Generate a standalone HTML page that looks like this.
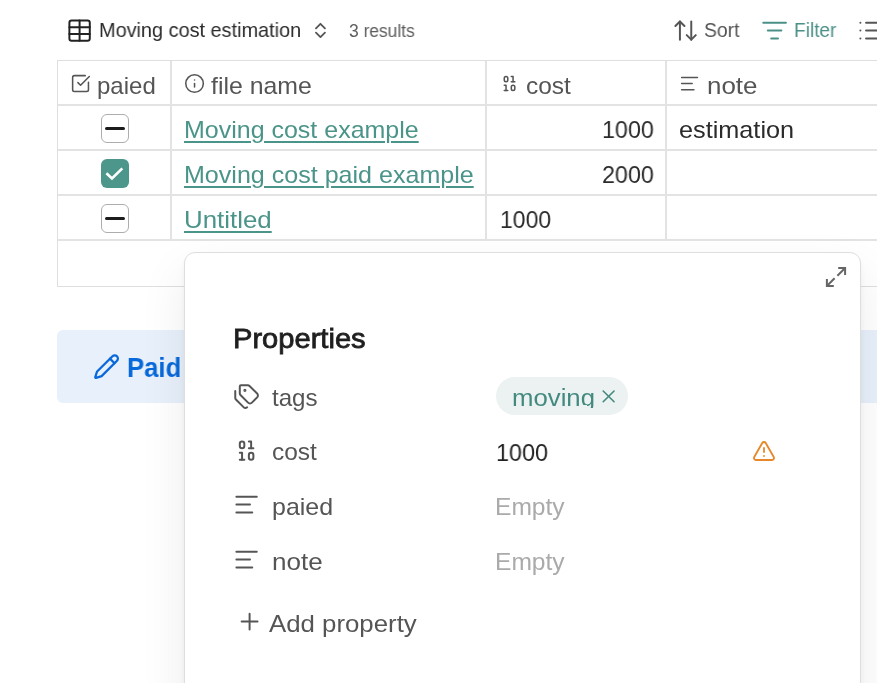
<!DOCTYPE html>
<html>
<head>
<meta charset="utf-8">
<title>Moving cost estimation</title>
<style>
html,body{margin:0;padding:0;}
body{width:877px;height:683px;overflow:hidden;background:#fff;position:relative;font-family:"Liberation Sans",sans-serif;color:#333;}
.t{position:absolute;white-space:nowrap;line-height:1;transform-origin:0 0;will-change:transform;}
.a{position:absolute;}
svg{position:absolute;overflow:visible;fill:none;stroke-linecap:round;stroke-linejoin:round;}
.i27{width:27.2px;height:27.2px;stroke-width:1.75;}
.i21{width:21.1px;height:21.1px;stroke-width:1.75;stroke:#555;}
.i24{width:24.75px;height:24.75px;stroke-width:1.75;}
.hl{position:absolute;height:1px;background:#dfdfdf;}
.h2{height:2px;background:#e3e3e3;}
.vl{position:absolute;width:1px;background:#dfdfdf;}
.v2{width:2px;background:#e3e3e3;}
.cb{position:absolute;width:25.6px;height:27px;border:1.1px solid #adadad;border-radius:6px;background:#fff;}
.cb i{position:absolute;left:2.9px;top:12.05px;width:19.9px;height:3px;border-radius:1.5px;background:#1c1c1c;}
.cbc{position:absolute;width:27.9px;height:29.2px;border-radius:6px;background:#4d968c;}
.lnk{color:#4b9489;text-decoration:underline;text-decoration-thickness:1.7px;text-underline-offset:3px;}
.hd{color:#555;}
.lab{color:#555;}
.emp{color:#aaa;}
</style>
</head>
<body>

<!-- toolbar -->
<svg class="i27" style="left:65.95px;top:17.1px;stroke:#222" viewBox="0 0 24 24"><path d="M12 3v18"/><rect width="18" height="18" x="3" y="3" rx="2"/><path d="M3 9h18"/><path d="M3 15h18"/></svg>
<span class="t" style="left:99.1px;top:20.3px;font-size:20.3px;color:#2b2b2b;transform:scaleX(.98)">Moving cost estimation</span>
<svg style="left:0;top:0;stroke:#555;stroke-width:1.8" width="400" height="60"><path d="M315.95 28.3L320.45 23.8L324.95 28.3M315.95 32.65L320.45 37.15L324.95 32.65"/></svg>
<span class="t" style="left:348.6px;top:22.9px;font-size:17.6px;color:#5c5c5c;transform:scaleX(.9885)">3 results</span>

<svg class="i27" style="left:671.9px;top:16.7px;stroke:#555" viewBox="0 0 24 24"><path d="m21 16-4 4-4-4"/><path d="M17 20V4"/><path d="m3 8 4-4 4 4"/><path d="M7 4v16"/></svg>
<span class="t" style="left:704.3px;top:20.3px;font-size:20.3px;color:#555;transform:scaleX(.955)">Sort</span>
<svg class="i27" style="left:760.85px;top:17px;stroke:#4b9088" viewBox="0 0 24 24"><path d="M2 5h20"/><path d="M6 12h12"/><path d="M9 19h6"/></svg>
<span class="t" style="left:794.3px;top:20.3px;font-size:20.3px;color:#4b9088;transform:scaleX(.94)">Filter</span>
<svg class="i27" style="left:856.9px;top:17px;stroke:#555" viewBox="0 0 24 24"><path d="M3 5h.01"/><path d="M3 12h.01"/><path d="M3 19h.01"/><path d="M8 5h13"/><path d="M8 12h13"/><path d="M8 19h13"/></svg>

<!-- table grid -->
<div class="hl" style="left:57px;top:60px;width:820px"></div>
<div class="hl h2" style="left:58px;top:104px;width:820px"></div>
<div class="hl h2" style="left:58px;top:149px;width:820px"></div>
<div class="hl h2" style="left:58px;top:194px;width:820px"></div>
<div class="hl h2" style="left:58px;top:239px;width:820px"></div>
<div class="hl" style="left:57px;top:286px;width:820px"></div>
<div class="vl" style="left:57px;top:60px;height:227px"></div>
<div class="vl v2" style="left:170px;top:61px;height:180px"></div>
<div class="vl v2" style="left:485px;top:61px;height:180px"></div>
<div class="vl v2" style="left:665px;top:61px;height:180px"></div>

<!-- header row -->
<svg class="i21" style="left:69.9px;top:73px" viewBox="0 0 24 24"><path d="M21 10.656V19a2 2 0 0 1-2 2H5a2 2 0 0 1-2-2V5a2 2 0 0 1 2-2h12.344"/><path d="m9 11 3 3L22 4"/></svg>
<span class="t hd" style="left:97.3px;top:74.1px;font-size:24px;transform:scaleX(.995)">paied</span>
<svg class="i21" style="left:183.55px;top:73px" viewBox="0 0 24 24"><circle cx="12" cy="12" r="10"/><path d="M12 16v-4"/><path d="M12 8h.01"/></svg>
<span class="t hd" style="left:210.8px;top:74.1px;font-size:24px;transform:scaleX(1.035)">file name</span>
<svg class="i21" style="left:498.85px;top:73px" viewBox="0 0 24 24"><rect x="14" y="14" width="4" height="6" rx="2"/><rect x="6" y="4" width="4" height="6" rx="2"/><path d="M6 20h4"/><path d="M14 10h4"/><path d="M6 14h2v6"/><path d="M14 4h2v6"/></svg>
<span class="t hd" style="left:526px;top:74.1px;font-size:24px;transform:scaleX(1.02)">cost</span>
<svg class="i21" style="left:678.5px;top:73px" viewBox="0 0 24 24"><path d="M21 5H3"/><path d="M15 12H3"/><path d="M17 19H3"/></svg>
<span class="t hd" style="left:706.5px;top:74.1px;font-size:24px;transform:scaleX(1.08)">note</span>

<!-- rows -->
<div class="cb" style="left:101.05px;top:113.9px"><i></i></div>
<span class="t lnk" style="left:183.5px;top:118.3px;font-size:24px;transform:scaleX(1.041)">Moving cost example</span>
<span class="t" style="left:602.3px;top:118.3px;font-size:24px;color:#2b2b2b;transform:scaleX(.972)">1000</span>
<span class="t" style="left:679px;top:118.3px;font-size:24px;color:#2b2b2b;transform:scaleX(1.052)">estimation</span>

<div class="cbc" style="left:101.05px;top:158.9px"><svg style="left:0;top:0;stroke:#fff;stroke-width:2.6;stroke-linecap:butt;stroke-linejoin:miter" width="28" height="29" viewBox="0 0 28 29"><path d="M5.4 14.3L11 19.55L21.3 9.4"/></svg></div>
<span class="t lnk" style="left:183.5px;top:163.3px;font-size:24px;transform:scaleX(1.044)">Moving cost paid example</span>
<span class="t" style="left:602.3px;top:163.3px;font-size:24px;color:#2b2b2b;transform:scaleX(.972)">2000</span>

<div class="cb" style="left:101.05px;top:203.9px"><i></i></div>
<span class="t lnk" style="left:183.5px;top:208.3px;font-size:24px;transform:scaleX(1.078)">Untitled</span>
<span class="t" style="left:500px;top:208.3px;font-size:24px;color:#2b2b2b;transform:scaleX(.958)">1000</span>

<!-- callout -->
<div class="a" style="left:57px;top:329.5px;width:830px;height:73px;border-radius:6px;background:#e7f0fb"></div>
<svg class="i27" style="left:93.05px;top:352.75px;stroke:#0969da;stroke-width:2" viewBox="0 0 24 24"><path d="M21.174 6.812a1 1 0 0 0-3.986-3.987L3.842 16.174a2 2 0 0 0-.5.83l-1.321 4.352a.5.5 0 0 0 .623.622l4.353-1.32a2 2 0 0 0 .83-.497z"/><path d="m15 5 4 4"/></svg>
<span class="t" style="left:126.8px;top:354.1px;font-size:28.1px;font-weight:bold;color:#0969da;transform:scaleX(.914)">Paid</span>

<!-- popup -->
<div class="a" style="left:183.9px;top:252.3px;width:674.7px;height:500px;border:1px solid #dedede;border-radius:11px;background:#fff;box-shadow:0 1.4px 2.75px rgba(0,0,0,.028),0 4.7px 9.2px rgba(0,0,0,.042),0 20.6px 48px rgba(0,0,0,.08)"></div>
<svg style="left:0;top:0;stroke:#666;stroke-width:2;stroke-linecap:butt;stroke-linejoin:miter" width="877" height="300"><path d="M838.2 268H845.1V274.9"/><path d="M833.8 286H826.9V279.1"/><path d="M845.1 268L837.4 275.7"/><path d="M826.9 286L834.6 278.3"/></svg>

<span class="t" style="left:233.2px;top:324.8px;font-size:27.8px;color:#1f1f1f;-webkit-text-stroke:.8px #1f1f1f;transform:scaleX(1.047)">Properties</span>

<svg class="i27" style="left:232.9px;top:382.9px;stroke:#555" viewBox="0 0 24 24"><path d="M13.172 2a2 2 0 0 1 1.414.586l6.71 6.71a2.4 2.4 0 0 1 0 3.408l-4.592 4.592a2.4 2.4 0 0 1-3.408 0l-6.71-6.71A2 2 0 0 1 6 9.172V3a1 1 0 0 1 1-1z"/><path d="M2 7v6.172a2 2 0 0 0 .586 1.414l6.71 6.71a2.4 2.4 0 0 0 3.191.193"/><circle cx="10.5" cy="6.5" r=".5" fill="#555"/></svg>
<span class="t lab" style="left:272.4px;top:385.9px;font-size:24px;transform:scaleX(1.005)">tags</span>
<div class="a" style="left:495.6px;top:376.8px;width:132.6px;height:38px;border-radius:19px;background:#ebf2f1"></div>
<div class="a" style="left:510px;top:380px;width:90px;height:28px;overflow:hidden"><span class="t" style="left:2px;top:6px;font-size:24.75px;color:#43897f;transform:scaleX(1.04)">moving</span><div class="a" style="left:70px;top:25.4px;width:6.5px;height:3px;background:#ebf2f1"></div></div>
<svg style="left:0;top:0;stroke:#43897f;stroke-width:1.6" width="877" height="420"><path d="M603.2 391L614.05 401.7M614.05 391L603.2 401.7"/></svg>

<svg class="i27" style="left:233.1px;top:437.45px;stroke:#555" viewBox="0 0 24 24"><rect x="14" y="14" width="4" height="6" rx="2"/><rect x="6" y="4" width="4" height="6" rx="2"/><path d="M6 20h4"/><path d="M14 10h4"/><path d="M6 14h2v6"/><path d="M14 4h2v6"/></svg>
<span class="t lab" style="left:272.4px;top:440.4px;font-size:24px;transform:scaleX(1.02)">cost</span>
<span class="t" style="left:496.3px;top:440.6px;font-size:24px;color:#222;transform:scaleX(.975)">1000</span>
<svg style="left:751.95px;top:439px;width:24px;height:24px;stroke:#e8862a;stroke-width:1.8" viewBox="0 0 24 24"><path d="m21.73 18-8-14a2 2 0 0 0-3.48 0l-8 14A2 2 0 0 0 4 21h16a2 2 0 0 0 1.73-3"/><path d="M12 9v4"/><path d="M12 17h.01"/></svg>

<svg class="i27" style="left:232.9px;top:490.9px;stroke:#555" viewBox="0 0 24 24"><path d="M21 5H3"/><path d="M15 12H3"/><path d="M17 19H3"/></svg>
<span class="t lab" style="left:271.6px;top:495.2px;font-size:24px;transform:scaleX(1.04)">paied</span>
<span class="t emp" style="left:494.9px;top:495px;font-size:24px;transform:scaleX(1.024)">Empty</span>

<svg class="i27" style="left:232.9px;top:545.9px;stroke:#555" viewBox="0 0 24 24"><path d="M21 5H3"/><path d="M15 12H3"/><path d="M17 19H3"/></svg>
<span class="t lab" style="left:271.8px;top:549.9px;font-size:24px;transform:scaleX(1.085)">note</span>
<span class="t emp" style="left:494.9px;top:549.7px;font-size:24px;transform:scaleX(1.024)">Empty</span>

<svg class="i27" style="left:235.8px;top:607.8px;stroke:#555" viewBox="0 0 24 24"><path d="M5 12h14"/><path d="M12 5v14"/></svg>
<span class="t lab" style="left:269px;top:611.5px;font-size:24px;transform:scaleX(1.075)">Add property</span>

</body>
</html>
